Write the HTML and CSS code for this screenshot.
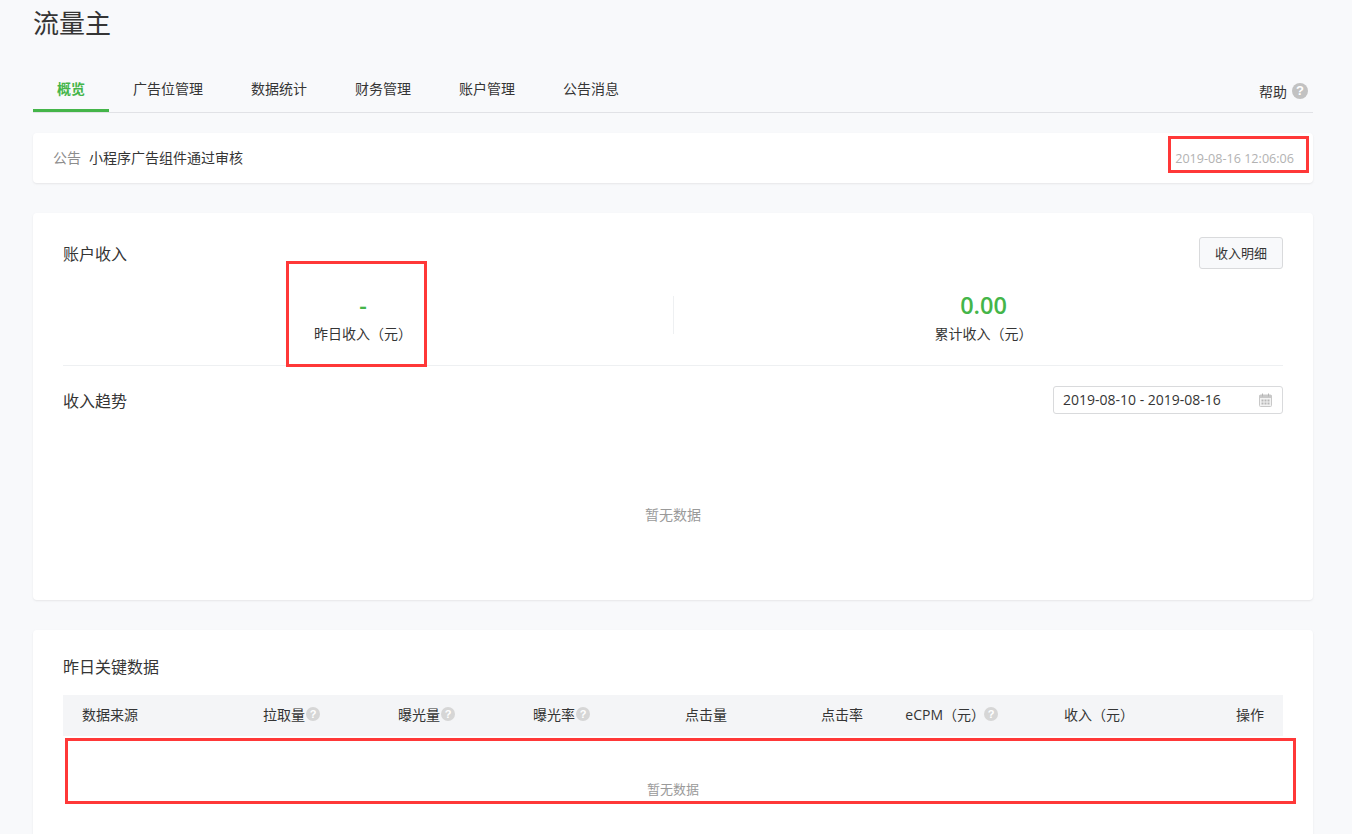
FILE: index.html
```html
<!DOCTYPE html>
<html lang="zh-CN">
<head>
<meta charset="utf-8">
<title>流量主</title>
<link rel="stylesheet" href="styles.css">
</head>
<body>
<div class="page">
  <h1 class="title">流量主</h1>
  <div class="tabs">
    <a class="tab active">概览</a>
    <a class="tab">广告位管理</a>
    <a class="tab">数据统计</a>
    <a class="tab">财务管理</a>
    <a class="tab">账户管理</a>
    <a class="tab">公告消息</a>
    <div class="help"><span>帮助</span><i class="help-icon">?</i></div>
  </div>

  <div class="card notice">
    <span class="notice-label">公告</span>
    <span class="notice-text">小程序广告组件通过审核</span>
    <span class="notice-date">2019-08-16 12:06:06</span>
    <div class="mark mark-date"></div>
  </div>

  <div class="card income">
    <div class="head head-account">
      <h2 class="sub">账户收入</h2>
      <button class="btn">收入明细</button>
    </div>
    <div class="stats">
      <div class="stat stat-left">
        <div class="num">-</div>
        <div class="cap">昨日收入（元）</div>
      </div>
      <div class="stat stat-right">
        <div class="num">0.00</div>
        <div class="cap">累计收入（元）</div>
      </div>
      <div class="mark mark-stat"></div>
    </div>
    <div class="head head-trend">
      <h2 class="sub">收入趋势</h2>
      <div class="range">
        <span>2019-08-10 - 2019-08-16</span>
        <svg class="cal" width="13" height="14" viewBox="0 0 13 14" aria-hidden="true">
          <rect x="0.5" y="2" width="12" height="11.5" rx="1" fill="#f2f2f2" stroke="#c8c8c8"/>
          <rect x="0.5" y="2" width="12" height="3" fill="#c8c8c8"/>
          <rect x="3" y="0.5" width="1" height="3" fill="#b5b5b5"/>
          <rect x="9" y="0.5" width="1" height="3" fill="#b5b5b5"/>
          <path d="M2.5 7.5h2M5.5 7.5h2M8.5 7.5h2M2.5 10.5h2M5.5 10.5h2M8.5 10.5h2" stroke="#b8b8b8" stroke-width="2"/>
        </svg>
      </div>
    </div>
    <div class="chart-empty">暂无数据</div>
  </div>

  <div class="card keydata">
    <h2 class="sub keydata-title">昨日关键数据</h2>
    <div class="thead">
      <div class="th first">数据来源</div>
      <div class="th">拉取量<i class="q">?</i></div>
      <div class="th">曝光量<i class="q">?</i></div>
      <div class="th">曝光率<i class="q">?</i></div>
      <div class="th">点击量</div>
      <div class="th">点击率</div>
      <div class="th">eCPM（元）<i class="q q-tight">?</i></div>
      <div class="th th-bracket">收入（元）</div>
      <div class="th">操作</div>
    </div>
    <div class="tbody">
      <div class="mark mark-table"></div>
      <div class="table-empty">暂无数据</div>
    </div>
  </div>
</div>
</body>
</html>
```

FILE: styles.css
```css
* { box-sizing: border-box; }
html, body { margin: 0; height: 834px; overflow: hidden; }
body {
  background: #f8f9fb;
  color: #353535;
  font-family: "Open Sans", "Noto Sans CJK SC", sans-serif;
  font-size: 14px;
}
.page { padding: 0 39px 0 33px; }
.title {
  margin: 0;
  height: 50px;
  font-size: 26px;
  font-weight: 400;
  line-height: 46px;
  color: #353535;
}
.tabs {
  display: flex;
  align-items: flex-end;
  height: 48px;
  margin-top: 15px;
  border-bottom: 1px solid #e1e2e6;
}
.tab {
  height: 47px;
  padding: 0 24px;
  line-height: 47px;
  border-bottom: 3px solid transparent;
  color: #353535;
}
.tab.active {
  color: #44b549;
  font-weight: 700;
  border-bottom-color: #44b549;
}
.help {
  margin-left: auto;
  display: flex;
  align-items: center;
  gap: 5px;
  height: 47px;
  padding: 5px 5px 0 0;
  font-size: 14px;
}
.help-icon {
  width: 16px;
  height: 16px;
  border-radius: 50%;
  background: #c2c2c2;
  color: #fff;
  font: 700 13px/16px "Liberation Sans", sans-serif;
  text-align: center;
}
.card {
  position: relative;
  background: #fff;
  border-radius: 4px;
  box-shadow: 0 1px 2px rgba(150, 150, 150, 0.18);
}
.notice {
  display: flex;
  align-items: center;
  height: 50px;
  margin-top: 20px;
  padding: 0 19px 0 20px;
}
.notice-label { color: #8d8d8d; margin-right: 8px; position: relative; top: -1px; }
.notice-text { position: relative; top: -1px; }
.notice-date { margin-left: auto; color: #b2b2b2; font-size: 12.6px; }
.mark { position: absolute; border: 3px solid #ff3838; pointer-events: none; }
.mark-date { left: 1135px; top: 3px; width: 141px; height: 37px; }
.income {
  height: 387px;
  margin-top: 30px;
  padding: 0 30px;
}
.head { display: flex; justify-content: space-between; align-items: center; }
.head-account { padding-top: 24px; height: 56px; }
.sub { margin: 0; font-size: 16px; font-weight: 400; color: #353535; }
.btn {
  width: 84px;
  height: 32px;
  padding: 0 0 2px;
  background: #f8f9fb;
  border: 1px solid #d9dadc;
  border-radius: 3px;
  color: #353535;
  font: inherit;
  font-size: 13px;
}
.stats {
  position: relative;
  display: grid;
  grid-template-columns: 1fr 1fr;
  height: 97px;
  border-bottom: 1px solid #eef0f2;
}
.stat { text-align: center; height: 38px; margin-top: 27px; }
.stat-left { padding-right: 10px; }
.stat-right { padding-left: 10px; border-left: 1px solid #eef0f2; }
.num {
  height: 20px;
  color: #44b549;
  font: 600 23.5px/18px "Open Sans", sans-serif;
}
.cap { margin-top: 8px; font-size: 14px; line-height: 20px; color: #353535; }
.mark-stat { left: 223px; top: -8px; width: 141px; height: 106px; }
.head-trend { height: 71px; padding-bottom: 4px; }
.range {
  display: flex;
  justify-content: space-between;
  align-items: center;
  width: 230px;
  height: 28px;
  padding: 0 10px 0 9px;
  background: #fff;
  border: 1px solid #d9dadc;
  border-radius: 3px;
  color: #353535;
  font-size: 14px;
}
.cal { display: block; flex: none; }
.chart-empty { margin-top: 67px; text-align: center; color: #9a9a9a; font-size: 14px; }
.keydata {
  height: 204px;
  margin-top: 30px;
  padding: 0 30px;
  border-radius: 4px 4px 0 0;
}
.keydata-title { height: 65px; line-height: 75px; }
.thead {
  display: grid;
  grid-template-columns: 141px 135px 135px 135px 137px 136px 135px 129px 137px;
  align-items: center;
  width: 1220px;
  height: 41px;
  padding-bottom: 4px;
  background: #f4f5f7;
  color: #353535;
}
.th {
  display: flex;
  justify-content: flex-end;
  align-items: center;
  padding-right: 19px;
  font-size: 14px;
}
.th.first { justify-content: flex-start; padding-left: 19px; }
.th-bracket { padding-right: 12px; }
.q {
  width: 14px;
  height: 14px;
  margin-left: 1px;
  border-radius: 50%;
  background: #d6d6d6;
  color: #fff;
  font: 700 11px/14px "Liberation Sans", sans-serif;
  text-align: center;
}
.q-tight { margin-left: -1px; }
.tbody { position: relative; height: 98px; }
.mark-table { left: 2px; top: 2px; width: 1231px; height: 66px; }
.table-empty {
  position: absolute;
  left: 0;
  right: 0;
  top: 43px;
  text-align: center;
  color: #9a9a9a;
  font-size: 13px;
}
```
